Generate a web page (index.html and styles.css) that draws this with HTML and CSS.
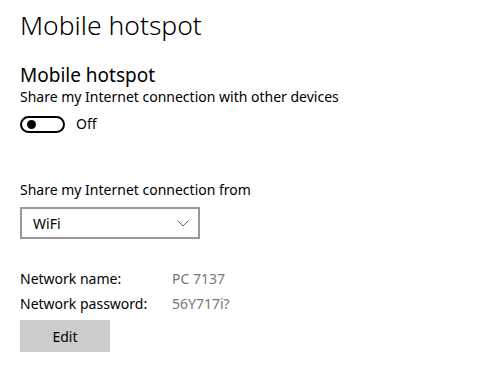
FILE: index.html
```html
<!DOCTYPE html>
<html lang="en">
<head>
  <meta charset="UTF-8">
  <title>Mobile hotspot</title>
  <link rel="stylesheet" href="styles.css">
</head>
<body>
  <h1 class="page-title">Mobile hotspot</h1>

  <section class="group">
    <h2 class="group-title">Mobile hotspot</h2>
    <p class="text">Share my Internet connection with other devices</p>
    <div class="toggle-row">
      <span class="toggle"><span class="knob"></span></span>
      <span class="text">Off</span>
    </div>
  </section>

  <section class="group share-from">
    <p class="text">Share my Internet connection from</p>
    <div class="select">
      <span>WiFi</span>
      <svg class="chevron" width="12" height="7" viewBox="0 0 12 7">
        <path d="M0.5 0.5 L6 6 L11.5 0.5" fill="none" stroke="#666" stroke-width="1"/>
      </svg>
    </div>
  </section>

  <section class="group network">
    <div class="info-row">
      <span class="label">Network name:</span>
      <span class="value">PC 7137</span>
    </div>
    <div class="info-row">
      <span class="label">Network password:</span>
      <span class="value">56Y717i?</span>
    </div>
    <button class="edit-btn">Edit</button>
  </section>
</body>
</html>
```

FILE: styles.css
```css
* {
  margin: 0;
  padding: 0;
  box-sizing: border-box;
}

body {
  background: #fff;
  color: #000;
  font-family: 'Noto Sans', 'Open Sans', sans-serif;
  padding: 0 20px;
}

.page-title {
  font-size: 26.5px;
  font-weight: 300;
  line-height: 36px;
  margin-top: 7px;
}

.group-title {
  font-size: 19px;
  font-weight: 400;
  line-height: 24px;
  margin-top: 20px;
}

.text {
  font-size: 14px;
  line-height: 20px;
}

.toggle-row {
  display: flex;
  align-items: center;
  gap: 11px;
  margin-top: 7px;
}

.toggle {
  width: 45px;
  height: 17px;
  border: 2px solid #000;
  border-radius: 9px;
  display: flex;
  align-items: center;
  padding-left: 5px;
}

.knob {
  width: 9px;
  height: 9px;
  border-radius: 50%;
  background: #000;
}

.share-from {
  margin-top: 46px;
}

.select {
  width: 180px;
  height: 32px;
  margin-top: 7px;
  border: 2px solid #999;
  display: flex;
  align-items: center;
  justify-content: space-between;
  padding: 0 9px 0 11px;
  font-size: 14px;
}

.network {
  margin-top: 27px;
}

.info-row {
  display: flex;
  font-size: 14px;
  line-height: 25px;
}

.label {
  width: 152px;
}

.value {
  color: #777;
}

.edit-btn {
  display: block;
  width: 90px;
  height: 32px;
  margin-top: 4px;
  border: none;
  background: #ccc;
  font-family: inherit;
  font-size: 14px;
  color: #000;
}
```
